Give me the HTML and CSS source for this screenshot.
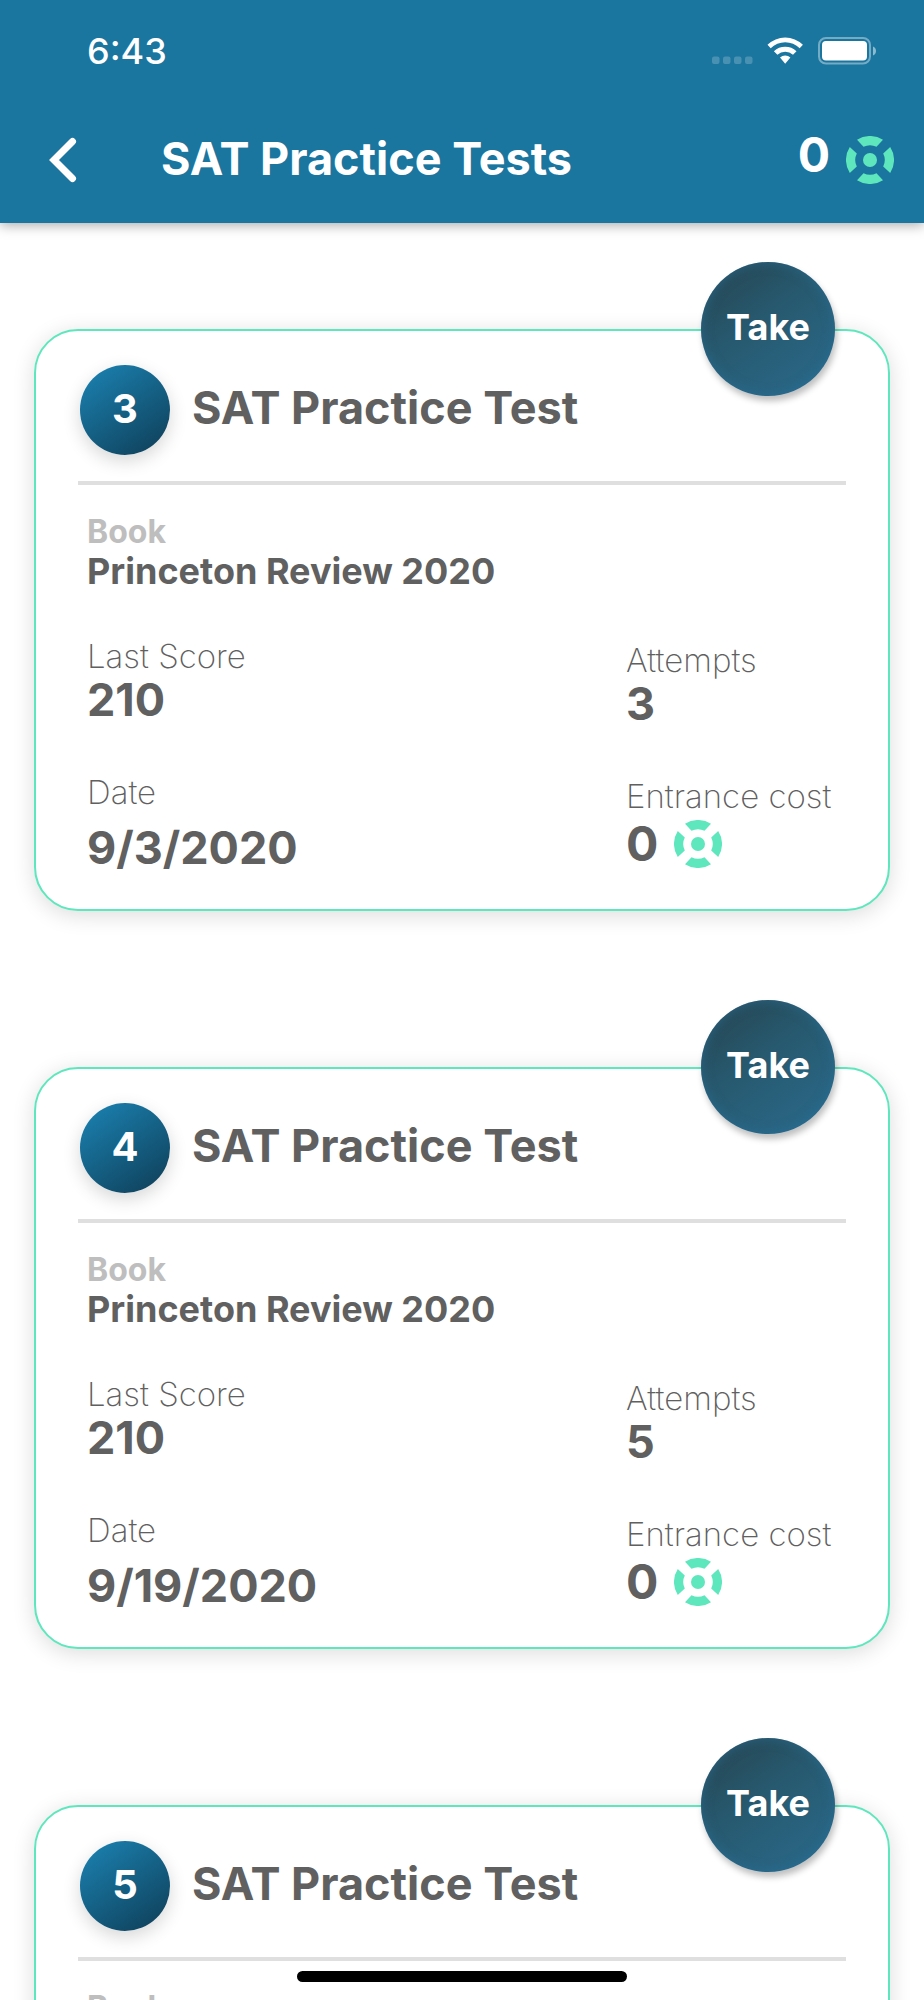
FILE: index.html
```
<!DOCTYPE html>
<html lang="en">
<head>
  <meta charset="UTF-8">
  <meta name="viewport" content="width=device-width, initial-scale=1.0">
  <title>SAT Practice Tests</title>
  <link rel="stylesheet" href="styles.css">
</head>
<body>
  <svg class="sprite" aria-hidden="true">
    <symbol id="coin" viewBox="-24 -24 48 48">
      <g fill="#5ee7bc">
        <circle r="7"/>
        <path id="arc" d="M-13 -20.2A24 24 0 0 1 13 -20.2L6.5 -13.2A14.6 14.6 0 0 0 -6.5 -13.2Z"/>
        <use href="#arc" transform="rotate(90)"/>
        <use href="#arc" transform="rotate(180)"/>
        <use href="#arc" transform="rotate(270)"/>
      </g>
    </symbol>
  </svg>

  <header>
    <div class="status">
      <span class="time">6:43</span>
      <svg class="status-icons" width="166" height="30" viewBox="0 0 166 30" fill="#fff" aria-hidden="true">
        <g opacity="0.2">
          <rect x="2" y="20.500" width="7.500" height="7.500" rx="2"/>
          <rect x="13" y="20.500" width="7.500" height="7.500" rx="2"/>
          <rect x="24" y="20.500" width="7.500" height="7.500" rx="2"/>
          <rect x="35" y="20.500" width="7.500" height="7.500" rx="2"/>
        </g>
        <path d="M57.500 8.700A25.500 25.500 0 0 1 92.900 8.700L89.700 12.200A20.500 20.500 0 0 0 60.700 12.200Z"/>
        <path d="M63.900 15.300A16.500 16.500 0 0 1 86.500 15.300L83 18.700A11.500 11.500 0 0 0 67.400 18.700Z"/>
        <path d="M70 21.500A7.800 7.800 0 0 1 80.400 21.500L75.200 27.700Z"/>
        <rect x="109" y="2" width="51" height="25.500" rx="7" fill="none" stroke="#fff" stroke-width="2" opacity="0.4"/>
        <rect x="112" y="5" width="45" height="19.500" rx="4"/>
        <path d="M163 10.500C167 12 167 18 163 19.500Z" opacity="0.5"/>
      </svg>
    </div>
    <div class="navbar">
      <button class="back" aria-label="Back">
        <svg width="28" height="46" viewBox="0 0 28 46" fill="none" stroke="#fff" stroke-width="7" stroke-linecap="round">
          <path d="M23.500 4.500L5 23L23.500 41.500"/>
        </svg>
      </button>
      <h1>SAT Practice Tests</h1>
      <div class="coins"><span>0</span> <svg class="coin"><use href="#coin"/></svg></div>
    </div>
  </header>

  <main class="tests" id="tests">
    <!-- Cards will be added here -->
  </main>

  <div class="home-bar"></div>

  <script>
    const tests = [
      { number: 3, book: "Princeton Review 2020", last: { score: 210, attempts: 3, date: "9/3/2020", cost: 0 } },
      { number: 4, book: "Princeton Review 2020", last: { score: 210, attempts: 5, date: "9/19/2020", cost: 0 } },
      { number: 5, book: "Princeton Review 2020" },
    ];

    const list = document.getElementById("tests");

    function renderStats(last) {
      return `
        <div class="stats">
          <dl>
            <dt>Last Score</dt>
            <dd>${last.score}</dd>
            <dt>Date</dt>
            <dd class="date">${last.date}</dd>
          </dl>
          <dl class="side">
            <dt>Attempts</dt>
            <dd>${last.attempts}</dd>
            <dt>Entrance cost</dt>
            <dd class="cost">${last.cost} <svg class="coin"><use href="#coin"/></svg></dd>
          </dl>
        </div>
      `;
    }

    tests.forEach(test => {
      const card = document.createElement("article");
      card.className = "card";
      card.innerHTML = `
        <button class="take">Take</button>
        <div class="card-head">
          <span class="number">${test.number}</span>
          <h2>SAT Practice Test</h2>
        </div>
        <div class="card-body">
          <dl class="book">
            <dt>Book</dt>
            <dd>${test.book}</dd>
          </dl>
          ${test.last ? renderStats(test.last) : ""}
        </div>
      `;
      list.appendChild(card);
    });
  </script>
</body>
</html>
```
FILE: styles.css
```
* {
  margin: 0; padding: 0; box-sizing: border-box;
  font-family: Inter, 'Liberation Sans', sans-serif;
}
body {
  height: 100vh;
  display: flex;
  flex-direction: column;
  overflow: hidden;
  background: #fff;
  color: #606060;
}
button {
  border: none;
  background: none;
  color: #fff;
  cursor: pointer;
}
.sprite {
  position: absolute;
  width: 0;
  height: 0;
}
.coin {
  width: 48px;
  height: 48px;
  flex: none;
}
header {
  position: relative;
  z-index: 1;
  flex: none;
  background: #1a759f;
  color: #fff;
  box-shadow: 0 2px 12px rgba(0,0,0,0.35);
}
.status {
  height: 97px;
  padding: 4px 48px 0 87px;
  display: flex;
  align-items: center;
  justify-content: space-between;
}
.time {
  font-size: 36px;
  font-weight: 500;
}
.navbar {
  height: 126px;
  padding: 0 30px 0 49px;
  display: flex;
  align-items: center;
}
.back {
  width: 112px;
  height: 46px;
  text-align: left;
}
.back svg {
  display: block;
}
h1 {
  flex: 1;
  padding-bottom: 2px;
  font-size: 45px;
  line-height: 52px;
  font-weight: 700;
}
.coins, .cost {
  display: flex;
  align-items: center;
  gap: 16px;
}
.coins {
  font-size: 48px;
  line-height: 52px;
  font-weight: 700;
}
.coins span {
  padding-bottom: 10px;
}
.tests {
  flex: 1;
  min-height: 0;
  overflow-y: auto;
  scrollbar-width: none;
  padding: 106px 34px;
}
.card {
  position: relative;
  margin-bottom: 156px;
  padding: 34px 42px 35px;
  border: 2px solid #5ee7bc;
  border-radius: 44px;
  background: #fff;
  box-shadow: 0 4px 22px rgba(0,0,0,0.14);
}
.take {
  position: absolute;
  top: -69px;
  right: 53px;
  width: 134px;
  height: 134px;
  padding-bottom: 4px;
  border-radius: 50%;
  background: linear-gradient(145deg, #264653 5%, #275a70 45%, #2a6a8c);
  box-shadow: 2px 5px 6px rgba(0,0,0,0.25), inset 0 0 12px rgba(42,111,151,0.7);
  font-size: 36px;
  font-weight: 700;
}
.card-head {
  display: flex;
  align-items: center;
  gap: 22px;
  padding: 0 2px 26px;
  border-bottom: 4px solid #dfdfdf;
}
.number {
  width: 90px;
  height: 90px;
  padding-bottom: 4px;
  display: flex;
  align-items: center;
  justify-content: center;
  border-radius: 50%;
  background: linear-gradient(145deg, #1a7dab 10%, #0f405a 95%);
  box-shadow: 0 6px 18px rgba(0,0,0,0.16);
  color: #fff;
  font-size: 40px;
  font-weight: 700;
}
h2 {
  padding-bottom: 4px;
  font-size: 45px;
  line-height: 52px;
  font-weight: 700;
}
.card-body {
  padding: 29px 0 0 9px;
}
dt {
  font-size: 33px;
  line-height: 36px;
  font-weight: 200;
}
dd {
  font-size: 45px;
  line-height: 52px;
  font-weight: 700;
}
.book {
  margin-bottom: 46px;
}
.book dt {
  font-size: 32px;
  font-weight: 700;
  color: #bebebe;
}
.book dd {
  font-size: 36px;
  line-height: 42px;
}
.stats {
  display: grid;
  grid-template-columns: 1fr 220px;
}
.stats dd + dt {
  margin-top: 48px;
}
.stats .date {
  margin-top: 12px;
}
.side {
  padding-top: 4px;
}
.stats .cost {
  margin-top: 4px;
  font-size: 48px;
}
.home-bar {
  position: fixed;
  z-index: 2;
  bottom: 18px;
  left: 50%;
  width: 330px;
  height: 11px;
  margin-left: -165px;
  border-radius: 6px;
  background: #000;
}
```
